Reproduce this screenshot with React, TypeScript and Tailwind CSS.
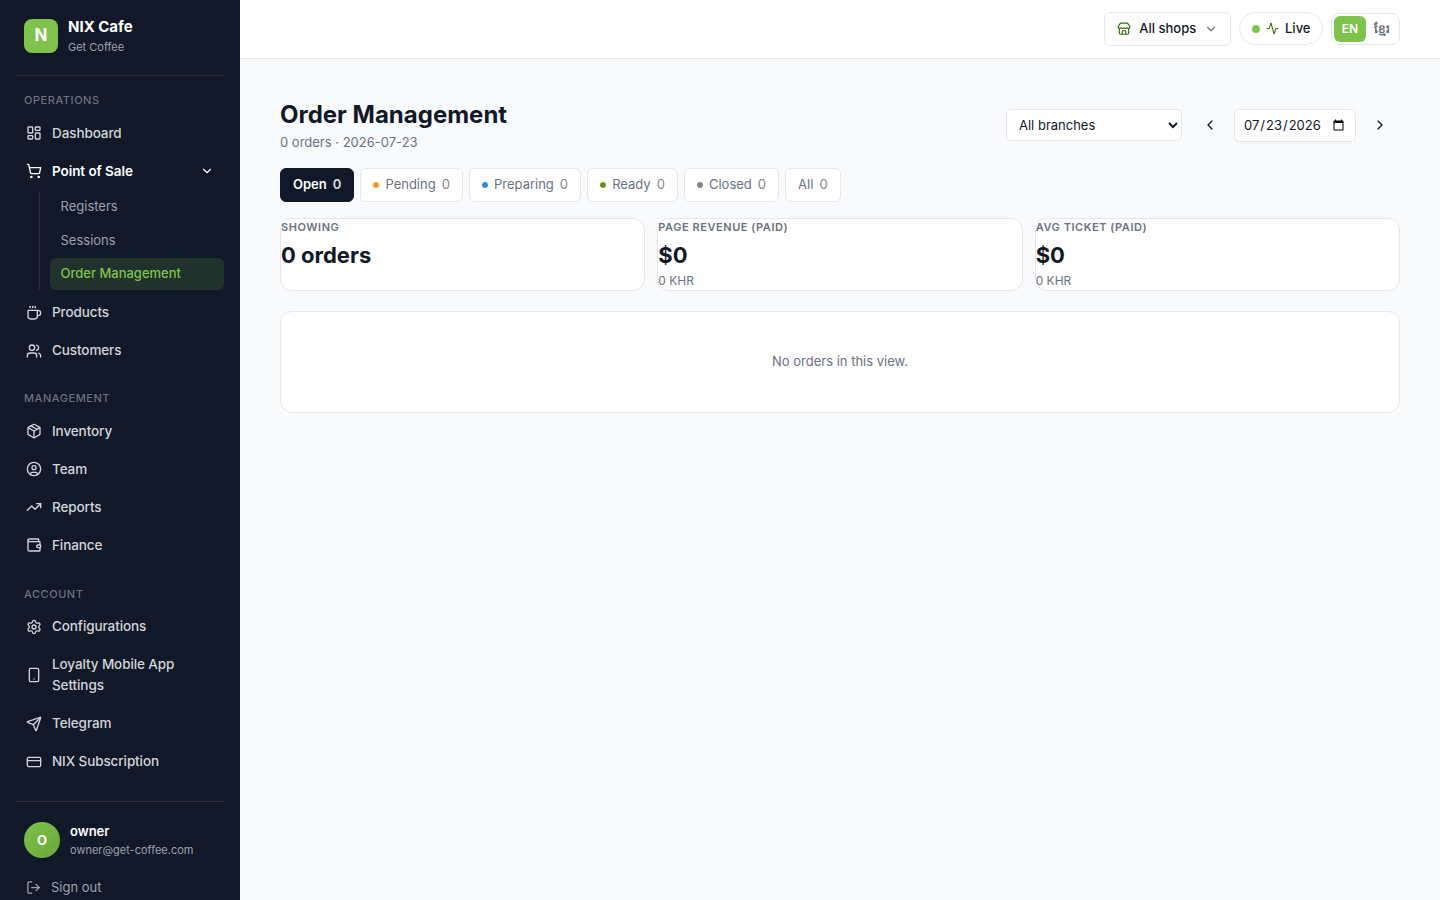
import {
  Activity,
  ChevronDown,
  ChevronLeft,
  ChevronRight,
  CircleUser,
  Coffee,
  CreditCard,
  LayoutDashboard,
  LogOut,
  Package,
  Send,
  Settings,
  ShoppingCart,
  Smartphone,
  Store,
  TrendingUp,
  Users,
  Wallet,
} from "lucide-react";
import type { LucideIcon } from "lucide-react";
import { useState } from "react";

type NavItem = { label: string; icon: LucideIcon };

const managementItems: NavItem[] = [
  { label: "Inventory", icon: Package },
  { label: "Team", icon: CircleUser },
  { label: "Reports", icon: TrendingUp },
  { label: "Finance", icon: Wallet },
];

const accountItems: NavItem[] = [
  { label: "Configurations", icon: Settings },
  { label: "Loyalty Mobile App Settings", icon: Smartphone },
  { label: "Telegram", icon: Send },
  { label: "NIX Subscription", icon: CreditCard },
];

const posItems = ["Registers", "Sessions", "Order Management"];

const tabs = [
  { label: "Open", count: 0, dot: "" },
  { label: "Pending", count: 0, dot: "bg-[#ef9f27]" },
  { label: "Preparing", count: 0, dot: "bg-[#378add]" },
  { label: "Ready", count: 0, dot: "bg-[#639922]" },
  { label: "Closed", count: 0, dot: "bg-[#888780]" },
  { label: "All", count: 0, dot: "" },
];

const stats = [
  { label: "Showing", value: "0 orders", sub: "" },
  { label: "Page revenue (paid)", value: "$0", sub: "0 KHR" },
  { label: "Avg ticket (paid)", value: "$0", sub: "0 KHR" },
];

function SectionLabel({ children }: { children: string }) {
  return (
    <div className="px-2 text-[11px] leading-[16.5px] font-medium tracking-[0.05em] text-[#6b7280] uppercase">
      {children}
    </div>
  );
}

function NavLink({ item }: { item: NavItem }) {
  const Icon = item.icon;
  return (
    <a href="#" className="flex items-center gap-2.5 rounded-md px-2.5 py-2 text-[13.5px] leading-[21px] font-medium tracking-[-0.0075em] text-[#d1d5db]">
      <Icon size={16} className="shrink-0" />
      <span>{item.label}</span>
    </a>
  );
}

function Sidebar() {
  return (
    <aside className="flex h-full w-60 shrink-0 flex-col overflow-hidden bg-[#111827] px-4">
      <div className="flex h-[76px] shrink-0 items-center gap-2.5 border-b border-white/10 px-2 pb-[3px]">
        <div className="flex size-[34px] items-center justify-center rounded-lg bg-[#7fc24c] pb-0.5 text-[17px] leading-5 font-bold text-white">
          N
        </div>
        <div>
          <div className="text-[15px] leading-[22px] font-bold text-white">NIX Cafe</div>
          <div className="text-[11px] leading-[18px] text-[#9ca3af]">Get Coffee</div>
        </div>
      </div>

      <nav className="shrink-0 pt-4">
        <SectionLabel>Operations</SectionLabel>
        <div className="mt-1.5 flex flex-col gap-px">
          <NavLink item={{ label: "Dashboard", icon: LayoutDashboard }} />
          <a href="#" className="flex items-center gap-2.5 rounded-md px-2.5 py-2 text-[13.5px] leading-[21px] font-semibold tracking-[-0.005em] text-white">
            <ShoppingCart size={16} className="shrink-0" />
            <span className="flex-1">Point of Sale</span>
            <ChevronDown size={14} />
          </a>
          <div className="mt-[0.5px] ml-[23px] flex flex-col gap-0.5 border-l border-white/10 pl-2.5">
            {posItems.map((label) => (
              <a
                key={label}
                href="#"
                className={
                  label === "Order Management"
                    ? "rounded-md bg-[#7fc24c]/15 px-[10.5px] py-1.5 text-[13px] leading-[19.5px] font-medium text-[#7fc24c]"
                    : "rounded-md px-[10.5px] py-1.5 text-[13px] leading-[19.5px] text-[#9ca3af]"
                }
              >
                {label}
              </a>
            ))}
          </div>
          <div className="mt-[3.5px] flex flex-col gap-px">
            <NavLink item={{ label: "Products", icon: Coffee }} />
            <NavLink item={{ label: "Customers", icon: Users }} />
          </div>
        </div>

        <div className="mt-[21px]">
          <SectionLabel>Management</SectionLabel>
          <div className="mt-1.5 flex flex-col gap-px">
            {managementItems.map((item) => (
              <NavLink key={item.label} item={item} />
            ))}
          </div>
        </div>

        <div className="mt-[22px]">
          <SectionLabel>Account</SectionLabel>
          <div className="mt-1.5 flex flex-col gap-px">
            {accountItems.map((item) => (
              <NavLink key={item.label} item={item} />
            ))}
          </div>
        </div>
      </nav>

      <div className="mt-[21px] shrink-0 border-t border-white/10 pt-[19px]">
        <div className="flex items-center gap-2.5 px-2">
          <div className="flex size-9 items-center justify-center rounded-full bg-linear-135 from-[#7fc24c] to-[#69a83a] pt-px text-[13px] font-bold text-white">
            O
          </div>
          <div>
            <div className="text-[13px] leading-5 font-semibold text-white">owner</div>
            <div className="text-[11px] leading-[18px] text-[#9ca3af]">owner@get-coffee.com</div>
          </div>
        </div>
        <button type="button" className="mt-[10.5px] flex items-center gap-2.5 px-2.5 py-2 text-[13px] leading-[19.5px] text-[#9ca3af]">
          <LogOut size={15} className="mt-px" />
          Sign out
        </button>
      </div>
    </aside>
  );
}

function Topbar() {
  return (
    <header className="flex h-[59px] shrink-0 items-center justify-end gap-2 border-b border-[#e5e7eb] bg-white px-10 pb-px">
      <button type="button" className="flex h-[34px] w-[127px] items-center rounded-md border border-[#e5e7eb] px-3 text-[13px] font-medium">
        <Store size={14} className="text-[#3b6d11]" />
        <span className="ml-[8.25px] flex-1 text-left">All shops</span>
        <ChevronDown size={14} className="text-[#6b7280]" />
      </button>
      <div className="flex h-[33px] w-[84px] items-center rounded-full border border-[#e5e7eb] pl-3 text-[13px] font-medium">
        <span className="size-2 shrink-0 rounded-full bg-[#7fc24c]" />
        <Activity size={13} className="ml-1.5 shrink-0 text-[#3b6d11]" />
        <span className="ml-1.5 pb-px leading-5">Live</span>
      </div>
      <div className="flex h-8 w-[69px] items-center rounded-lg border border-[#e5e7eb] px-0.5">
        <button type="button" className="h-[26px] w-8 rounded-md bg-[#7fc24c] text-xs font-semibold text-white">
          EN
        </button>
        <button type="button" className="flex-1 text-xs font-semibold text-[#6b7280]">
          ខ្មែរ
        </button>
      </div>
    </header>
  );
}

export default function App() {
  const [branch, setBranch] = useState("all");
  const [date, setDate] = useState("2026-07-23");

  return (
    <div className="flex h-screen overflow-hidden bg-[#f9fafc] font-[Inter,'Noto_Sans',sans-serif] text-[#111827]">
      <Sidebar />
      <div className="flex min-w-0 flex-1 flex-col">
        <Topbar />
        <main className="flex-1 px-10 pt-10">
          <div className="flex items-start justify-between">
            <div>
              <h1 className="text-2xl leading-8 font-bold">Order Management</h1>
              <p className="mt-px text-[13px] leading-5 text-[#6b7280]">0 orders · 2026-07-23</p>
            </div>
            <div className="flex items-center pt-1.5">
              <select
                value={branch}
                onChange={(e) => setBranch(e.target.value)}
                className="h-8 w-44 rounded-[5px] border border-[#e5e7eb] bg-white px-2 text-[13px]"
              >
                <option value="all">All branches</option>
              </select>
              <button type="button" className="ml-2 flex size-10 items-center justify-center" aria-label="Previous day">
                <ChevronLeft size={16} />
              </button>
              <input
                type="date"
                value={date}
                onChange={(e) => setDate(e.target.value)}
                className="ml-1 h-[33px] w-[122px] rounded-[5px] border border-[#e5e7eb] bg-white px-2 pt-px text-[13px]"
              />
              <button type="button" className="ml-1 flex size-10 items-center justify-center" aria-label="Next day">
                <ChevronRight size={16} />
              </button>
            </div>
          </div>

          <div className="mt-4 flex gap-[6.1px]">
            {tabs.map((tab) => (
              <button
                key={tab.label}
                type="button"
                className={
                  tab.label === "Open"
                    ? "flex h-[34px] items-center gap-1.5 rounded-md border border-[#111827] bg-[#111827] px-3 text-[13px] font-semibold text-white"
                    : "flex h-[34px] items-center gap-1.5 rounded-md border border-[#e5e7eb] bg-white px-3 text-[13px] text-[#6b7280]"
                }
              >
                {tab.dot && <span className={`size-1.5 rounded-full ${tab.dot}`} />}
                {tab.label}
                <span className="opacity-85">{tab.count}</span>
              </button>
            ))}
          </div>

          <div className="mt-4 grid grid-cols-3 gap-3">
            {stats.map((stat) => (
              <div key={stat.label} className="h-[73px] rounded-xl border border-[#e5e7eb] bg-white">
                <div className="text-[11px] leading-4 font-semibold tracking-[0.05em] text-[#6b7280] uppercase">{stat.label}</div>
                <div className="mt-1 text-[22px] leading-[33px] font-bold">{stat.value}</div>
                {stat.sub && <div className="text-xs leading-[18px] text-[#6b7280]">{stat.sub}</div>}
              </div>
            ))}
          </div>

          <div className="mt-5 flex h-[102px] items-center justify-center rounded-xl border border-[#e5e7eb] bg-white text-[13px] text-[#6b7280]">
            No orders in this view.
          </div>
        </main>
      </div>
    </div>
  );
}
